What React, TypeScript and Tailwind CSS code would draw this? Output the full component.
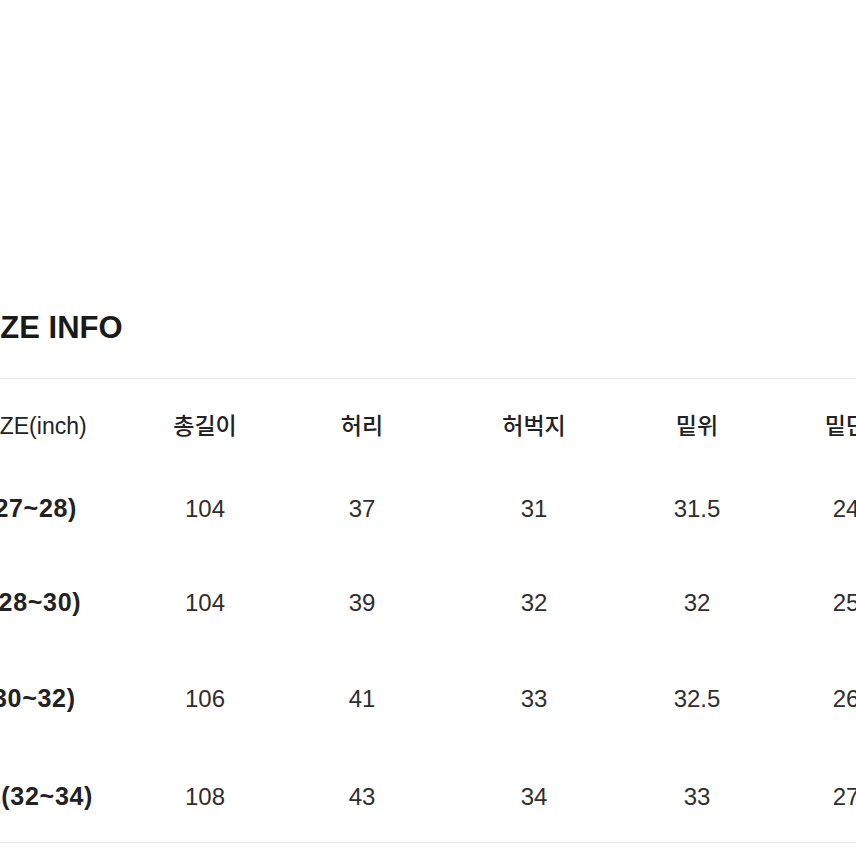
import React from 'react';

const font = { fontFamily: '"Liberation Sans", "Noto Sans CJK KR", Arial, sans-serif' };

const headers = ['총길이', '허리', '허벅지', '밑위', '밑단'];

const rows = [
  { size: 'S(27~28)', values: ['104', '37', '31', '31.5', '24'], h: 'h-[87px] pb-[6px]' },
  { size: 'M(28~30)', values: ['104', '39', '32', '32', '25'], h: 'h-[95px]' },
  { size: 'L(30~32)', values: ['106', '41', '33', '32.5', '26'], h: 'h-[97px]' },
  { size: 'XL(32~34)', values: ['108', '43', '34', '33', '27'], h: 'h-[95px] pt-[4px]' },
];

const cols = 'grid grid-cols-[150px_190px_124px_220px_106px_192px] items-center text-center';

export default function App() {
  return (
    <div className="w-[856px] h-[856px] overflow-hidden bg-white" style={font}>
      <div className="ml-[-40px] w-[982px] pt-[308px]">
        <h2 className="pl-[11px] text-[31px] leading-[40px] font-bold text-[#1a1a1a]">SIZE INFO</h2>

        <div className="mt-[30px] border-t border-b border-[#e6e6e6]">
          <div className={`${cols} h-[89px] pt-[6px] text-[23px] font-medium text-[#222]`}>
            <div className="text-left pl-[18px]">SIZE(inch)</div>
            {headers.map((h) => (
              <div key={h}>{h}</div>
            ))}
          </div>

          {rows.map((r) => (
            <div key={r.size} className={`${cols} ${r.h} text-[24px] text-[#2e2e2e]`}>
              <div className="text-left pl-[8px] text-[25px] font-bold text-[#222] tracking-[0.7px]">{r.size}</div>
              {r.values.map((v, i) => (
                <div key={i}>{v}</div>
              ))}
            </div>
          ))}
        </div>
      </div>
    </div>
  );
}
